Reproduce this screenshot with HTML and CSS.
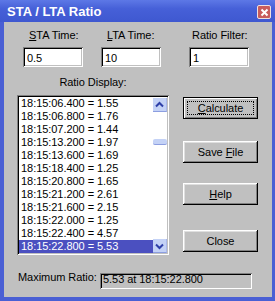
FILE: index.html
```html
<!DOCTYPE html>
<html lang="en">
<head>
  <meta charset="UTF-8" />
  <title>STA / LTA Ratio</title>
  <link rel="stylesheet" href="styles.css">
</head>
<body>
  <div class="window">
    <div class="titlebar">
      <span class="title">STA / LTA Ratio</span>
      <span class="close-btn">
        <svg width="9" height="9" viewBox="0 0 9 9"><path d="M1.5 1.5 L7.5 7.5 M7.5 1.5 L1.5 7.5" stroke="#fff" stroke-width="2" fill="none"/></svg>
      </span>
    </div>

    <div class="client">
      <div class="params">
        <div class="param">
          <label class="lbl"><u>S</u>TA Time:</label>
          <input class="field" type="text" value="0.5" />
        </div>
        <div class="param param-lta">
          <label class="lbl"><u>L</u>TA Time:</label>
          <input class="field" type="text" value="10" />
        </div>
        <div class="param param-filter">
          <label class="lbl">Ratio Filter:</label>
          <input class="field" type="text" value="1" />
        </div>
      </div>

      <div class="middle">
        <div class="display">
          <div class="caption">Ratio Display:</div>
          <div class="listbox">
            <ul class="rows">
              <li>18:15:06.400 = 1.55</li>
              <li>18:15:06.800 = 1.76</li>
              <li>18:15:07.200 = 1.44</li>
              <li>18:15:13.200 = 1.97</li>
              <li>18:15:13.600 = 1.69</li>
              <li>18:15:18.400 = 1.25</li>
              <li>18:15:20.800 = 1.65</li>
              <li>18:15:21.200 = 2.61</li>
              <li>18:15:21.600 = 2.15</li>
              <li>18:15:22.000 = 1.25</li>
              <li>18:15:22.400 = 4.57</li>
              <li class="selected">18:15:22.800 = 5.53</li>
            </ul>
            <div class="scrollbar">
              <div class="arrow">
                <svg width="13" height="14" viewBox="0 0 13 14"><path d="M3 8.5 L6.5 5 L10 8.5" stroke="#2e3fa8" stroke-width="2" fill="none"/></svg>
              </div>
              <div class="thumb"></div>
              <div class="track"></div>
              <div class="arrow">
                <svg width="13" height="14" viewBox="0 0 13 14"><path d="M3 5.5 L6.5 9 L10 5.5" stroke="#2e3fa8" stroke-width="2" fill="none"/></svg>
              </div>
            </div>
          </div>
        </div>

        <div class="buttons">
          <button class="btn btn-default"><span class="focus"><u>C</u>alculate</span></button>
          <button class="btn btn-save">Save <u>F</u>ile</button>
          <button class="btn btn-help"><u>H</u>elp</button>
          <button class="btn btn-close">Close</button>
        </div>
      </div>

      <div class="summary">
        <span class="summary-lbl">Maximum Ratio:</span>
        <div class="readout">5.53 at 18:15:22.800</div>
      </div>
    </div>
  </div>
</body>
</html>
```

FILE: styles.css
```css
body {
  margin: 0;
  padding: 0;
  font-family: "Liberation Sans", Arial, sans-serif;
  font-size: 11px;
  letter-spacing: -0.05px;
  color: #000;
  background: #c0c0c0;
}

.window {
  width: 275px;
  height: 301px;
  box-sizing: border-box;
  display: flex;
  flex-direction: column;
  background: #4a5fd4;
}

.titlebar {
  height: 20px;
  padding: 2px 0 0 7px;
  display: flex;
  align-items: flex-start;
  justify-content: space-between;
  background: linear-gradient(#5d78e6, #4660d8 40%, #3f58d0);
}

.title {
  font-weight: bold;
  font-size: 13px;
  letter-spacing: 0;
  line-height: 20px;
  color: #fff;
}

.close-btn {
  width: 12px;
  height: 12px;
  margin: 3px 4px 0 0;
  display: flex;
  align-items: center;
  justify-content: center;
  background: #c85c5c;
  border: 1px solid #f0e0e0;
  border-radius: 2px;
}

.client {
  flex: 1;
  margin: 0 3px 4px 4px;
  background: #c0c0c0;
}

/* top row: three edit fields */
.params {
  display: flex;
  padding: 7px 0 0 19px;
}

.param {
  width: 60px;
  display: flex;
  flex-direction: column;
}

.param-lta {
  margin-left: 18px;
}

.param-filter {
  margin-left: 28px;
}

.lbl {
  line-height: 13px;
  margin-left: 6px;
}

.param-filter .lbl {
  margin-left: 3px;
}

.field {
  margin: 5px 0 0;
  width: 60px;
  height: 20px;
  box-sizing: border-box;
  padding: 1px 2px 0 4px;
  border: none;
  outline: none;
  background: #fff;
  font: inherit;
  letter-spacing: inherit;
  box-shadow: inset 1px 1px #808080, inset -1px -1px #fff, inset 2px 2px #000, inset -2px -2px #c0c0c0;
}

/* list + buttons */
.middle {
  display: flex;
  margin-top: 9px;
  padding-left: 13px;
}

.display {
  width: 152px;
}

.caption {
  text-align: center;
  line-height: 13px;
}

.listbox {
  margin-top: 6px;
  height: 160px;
  box-sizing: border-box;
  padding: 2px;
  display: flex;
  background: #fff;
  box-shadow: inset 1px 1px #808080, inset -1px -1px #fff, inset 2px 2px #000, inset -2px -2px #c0c0c0;
}

.rows {
  flex: 1;
  list-style: none;
  margin: 0;
  padding: 0;
}

.rows li {
  line-height: 13px;
  height: 13px;
  padding-left: 2px;
  white-space: nowrap;
}

.rows li.selected {
  background: #4b50c0;
  color: #fff;
}

.scrollbar {
  width: 14px;
  display: flex;
  flex-direction: column;
}

.arrow {
  height: 14px;
  box-sizing: border-box;
  background: #c4d2f6;
  border-bottom: 1px solid #8c9ee0;
  border-right: 1px solid #aab8ec;
  display: flex;
}

.scrollbar .arrow:first-child {
  margin-top: 1px;
}

.thumb {
  margin-top: 27px;
  height: 6px;
  box-sizing: border-box;
  background: #c4d2f6;
  border-bottom: 1px solid #8c9ee0;
  border-radius: 2px;
}

.track {
  flex: 1;
}

.buttons {
  margin-left: 14px;
  padding-top: 21px;
  display: flex;
  flex-direction: column;
}

.btn {
  width: 75px;
  height: 22px;
  padding: 0;
  border: none;
  background: #c0c0c0;
  font: inherit;
  letter-spacing: inherit;
  color: #000;
  box-shadow: inset -1px -1px #000, inset 1px 1px #fff, inset -2px -2px #808080, inset 2px 2px #dfdfdf;
}

.btn-default {
  padding: 3px;
  display: flex;
  border: 1px solid #000;
  box-shadow: inset 1px 1px #fff, inset -1px -1px #808080;
}

.focus {
  flex: 1;
  display: flex;
  align-items: center;
  justify-content: center;
  border: 1px dotted #000;
}

.btn-save {
  margin-top: 22px;
}

.btn-help {
  margin-top: 20px;
}

.btn-close {
  margin-top: 25px;
}

/* bottom readout */
.summary {
  display: flex;
  align-items: flex-start;
  margin-top: 18px;
  padding-left: 14px;
}

.summary-lbl {
  width: 82px;
  line-height: 8px;
}

.readout {
  width: 152px;
  height: 16px;
  box-sizing: border-box;
  padding: 2px 0 0 3px;
  line-height: 8px;
  box-shadow: inset 1px 1px #808080, inset -1px -1px #fff, inset 2px 2px #000, inset -2px -2px #c0c0c0;
}
```
